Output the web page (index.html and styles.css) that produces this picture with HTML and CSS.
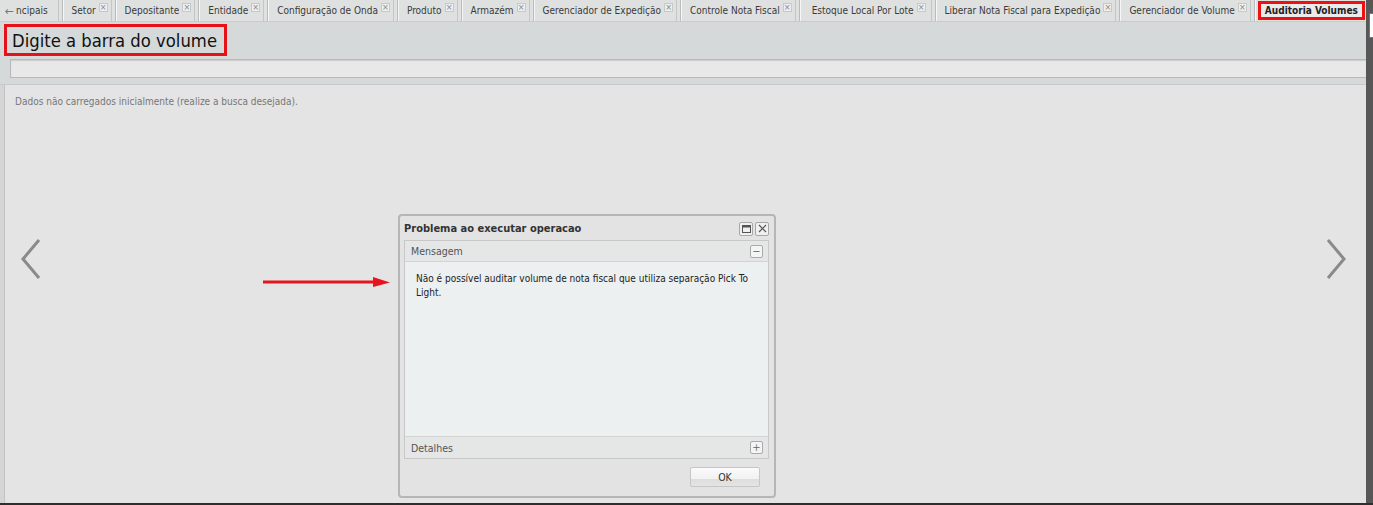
FILE: index.html
```html
<!DOCTYPE html>
<html lang="pt">
<head>
<meta charset="utf-8">
<title>Auditoria Volumes</title>
<link rel="stylesheet" href="styles.css">
</head>
<body>
<div class="app">
  <div class="main">
    <div class="tabbar">
      <div class="tab first"><span class="back">&#8592;</span>ncipais</div>
      <div class="tab">Setor <span class="x">&#215;</span></div>
      <div class="tab">Depositante <span class="x">&#215;</span></div>
      <div class="tab">Entidade <span class="x">&#215;</span></div>
      <div class="tab">Configuração de Onda <span class="x">&#215;</span></div>
      <div class="tab">Produto <span class="x">&#215;</span></div>
      <div class="tab">Armazém <span class="x">&#215;</span></div>
      <div class="tab">Gerenciador de Expedição <span class="x">&#215;</span></div>
      <div class="tab">Controle Nota Fiscal <span class="x">&#215;</span></div>
      <div class="tab wide">Estoque Local Por Lote <span class="x">&#215;</span></div>
      <div class="tab">Liberar Nota Fiscal para Expedição <span class="x">&#215;</span></div>
      <div class="tab">Gerenciador de Volume <span class="x">&#215;</span></div>
      <div class="tab active"><span class="hl">Auditoria Volumes</span></div>
    </div>
    <div class="titlebar">
      <h1 class="title">Digite a barra do volume</h1>
    </div>
    <div class="searchbar">
      <div class="input"></div>
    </div>
    <div class="content">
      <p class="empty">Dados não carregados inicialmente (realize a busca desejada).</p>
      <div class="stage">
        <svg class="chev" width="24" height="44" viewBox="0 0 24 44"><polyline points="19,3 3,22 19,41" fill="none" stroke="#8a8a8a" stroke-width="3"/></svg>
        <svg class="redarrow" width="128" height="12" viewBox="0 0 128 12"><line x1="0" y1="6" x2="114" y2="6" stroke="#e8141c" stroke-width="3" stroke-linecap="round"/><polygon points="110,1 127,6.5 110,11" fill="#e8141c"/></svg>
        <div class="dialog">
          <div class="dlg-head">
            <span class="dlg-title">Problema ao executar operacao</span>
            <span class="tool"><svg width="9" height="8" viewBox="0 0 9 8"><rect x="0.5" y="0.5" width="8" height="7" fill="none" stroke="#555"/><line x1="0" y1="1.5" x2="9" y2="1.5" stroke="#555" stroke-width="2"/></svg></span>
            <span class="tool"><svg width="9" height="9" viewBox="0 0 9 9"><path d="M1 1L8 8M8 1L1 8" stroke="#555" stroke-width="1.2"/></svg></span>
          </div>
          <div class="panel">
            <div class="panel-head"><span>Mensagem</span><span class="ptool">&#8722;</span></div>
            <div class="panel-body">Não é possível auditar volume de nota fiscal que utiliza separação Pick To Light.</div>
            <div class="panel-head foot"><span>Detalhes</span><span class="ptool">+</span></div>
          </div>
          <div class="dlg-foot"><button class="ok">OK</button></div>
        </div>
        <svg class="chev" width="24" height="44" viewBox="0 0 24 44"><polyline points="5,3 21,22 5,41" fill="none" stroke="#8a8a8a" stroke-width="3"/></svg>
      </div>
    </div>
  </div>
  <div class="rightbar"><div class="blue"></div></div>
</div>
</body>
</html>
```
FILE: styles.css
```css
* { box-sizing: border-box; }
html, body { margin: 0; padding: 0; }
body {
  width: 1373px; height: 505px; overflow: hidden;
  background: #e4e4e4;
  font-family: "DejaVu Sans", "Liberation Sans", sans-serif;
  font-stretch: condensed;
  color: #333;
}
.app { display: flex; border-bottom: 2px solid #2e2e2e; height: 505px; }
.main { width: 1366px; flex: none; display: flex; flex-direction: column; overflow: hidden; }
.rightbar { flex: 1; background: #575757; padding-top: 13px; }
.blue { height: 25px; margin-left: 3px; background: #fff; border: 1px solid #3c7fd1; border-right: 0; }

.tabbar {
  height: 22px; display: flex; align-items: stretch; flex: none;
  background: #dfe1e1; border-bottom: 1px solid #c9cccc;
  font-size: 10px; color: #3a3a3a;
}
.tab {
  display: flex; align-items: center; white-space: nowrap; flex: none;
  padding: 0 7px 0 9px;
  border-right: 1px solid #b9bcbc;
  box-shadow: 1px 0 0 #f6f6f6, inset -3px 0 0 #dfe1e1, inset -4px 0 0 #c3c6c6;
}
.tab.first { padding-left: 5px; padding-right: 14px; }
.tab.wide { padding-left: 12px; padding-right: 9px; }
.back { color: #777; margin-right: 2px; font-size: 12px; }
.x {
  display: inline-flex; width: 9px; height: 9px; align-items: center; justify-content: center;
  font-size: 9px; color: #888; border: 1px solid #c8c8c8; background: #eee; margin-left: 3px;
  position: relative; top: -3px; line-height: 1;
}
.tab.active { padding: 1px 2px 1px 3px; box-shadow: none; border: 0; }
.hl {
  display: flex; align-items: center; height: 100%;
  padding: 0 4px; border: 3px solid #e11; background: #ebebeb;
  font-weight: bold; color: #222;
}

.titlebar { height: 35px; flex: none; background: #d6d9d9; padding: 2px 0 0 4px; }
.title {
  margin: 0; display: inline-block; font-weight: normal;
  font-size: 18.3px; line-height: 25px; height: 32px;
  padding: 1px 7px 0 5px; border: 3px solid #e5121a; color: #111;
}
.searchbar { height: 28px; flex: none; background: #d6d9d9; padding: 2px 0 6px 10px; border-bottom: 1px solid #c6c9c9; }
.input { height: 19px; background: #e8e8e8; border: 1px solid #b7baba; border-right: 0; box-shadow: inset 0 1px 1px #ccc; }

.content {
  flex: 1; margin-left: 4px; border-left: 1px solid #c3c3c3;
  box-shadow: -4px 0 0 #d4d6d6;
  position: relative;
}
.empty { margin: 11px 0 0 10px; font-size: 10px; color: #777; }
.stage { display: flex; align-items: flex-start; padding: 0 0 0 15px; }

.chev { margin-top: 130px; }
.stage > .chev:last-child { margin-left: auto; margin-right: 19px; }
.redarrow { position: absolute; left: 258px; top: 191px; }

.dialog {
  margin: 107px 0 0 354px; width: 378px; height: 284px;
  border: 2px solid #b6b6b6; border-radius: 4px; background: #e3e3e3;
  padding: 0 5px 0 4px; display: flex; flex-direction: column;
}
.dlg-head { height: 24px; display: flex; align-items: center; gap: 2px; padding-top: 1px; }
.dlg-title { flex: 1; font-weight: bold; font-size: 11px; color: #333; }
.tool {
  width: 14px; height: 14px; border: 1px solid #a8a8a8; background: #f0f0f0;
  display: inline-flex; align-items: center; justify-content: center; border-radius: 2px;
}
.panel { height: 219px; border: 1px solid #c8c8c8; display: flex; flex-direction: column; }
.panel-head {
  height: 21px; display: flex; align-items: center; justify-content: space-between;
  padding: 0 5px 0 6px; font-size: 10.5px; color: #555; background: #e5e6e6;
  border-bottom: 1px solid #d3d3d3;
}
.panel-head.foot { border-bottom: 0; border-top: 1px solid #d3d3d3; height: 22px; }
.ptool {
  width: 13px; height: 13px; border: 1px solid #aaa; background: #f4f4f4; border-radius: 2px;
  font-size: 11px; line-height: 11px; text-align: center; color: #777;
}
.panel-body {
  flex: 1; background: #edf0f1; padding: 10px 12px 0 11px;
  font-size: 10px; line-height: 14px; color: #222;
}
.dlg-foot { flex: 1; display: flex; justify-content: flex-end; align-items: flex-start; padding: 8px 9px 0 0; }
.ok {
  width: 70px; height: 20px; font: inherit; font-size: 10.5px; color: #333;
  border: 1px solid #c6c6c6; border-radius: 2px;
  background: linear-gradient(#fafafa 0, #f2f2f2 60%, #dedede 61%, #e4e4e4 100%);
}
```
